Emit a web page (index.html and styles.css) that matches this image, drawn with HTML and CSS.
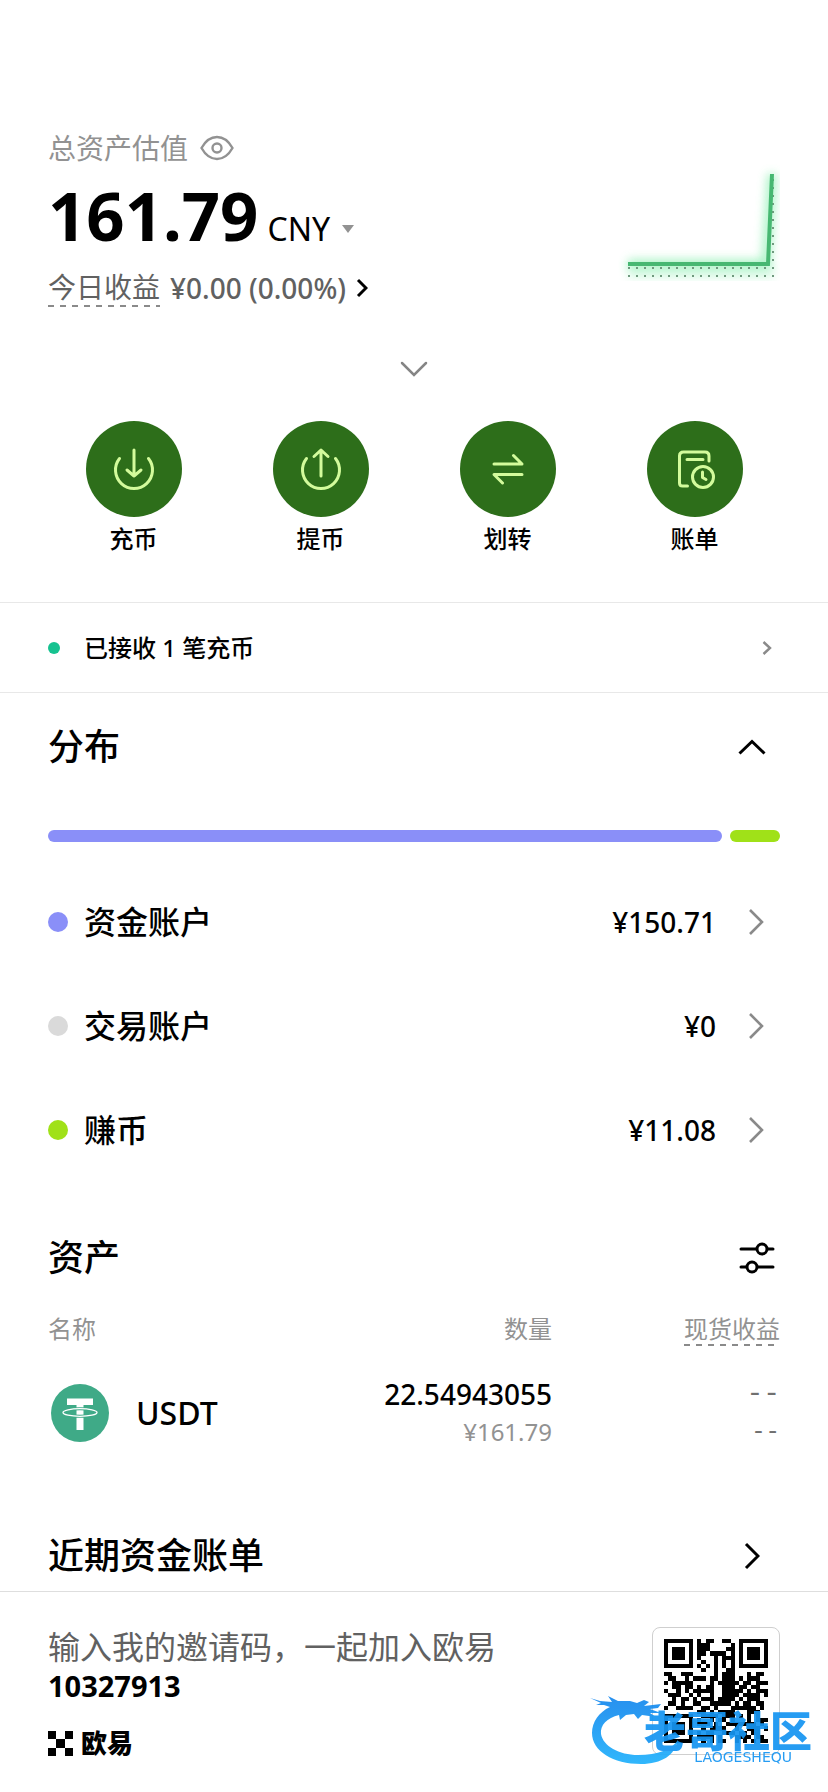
FILE: index.html
```html
<!DOCTYPE html>
<html lang="zh-CN">
<head>
<meta charset="utf-8">
<meta name="viewport" content="width=device-width, initial-scale=1">
<title>资产</title>
<link rel="stylesheet" href="styles.css">
</head>
<body>
<main class="page">
  <section class="overview">
    <div class="summary">
      <div class="summary-label">
        <h1 class="label">总资产估值</h1>
        <button class="icon-button" aria-label="隐藏资产">
          <svg width="34" height="26" viewBox="0 0 34 26" fill="none" stroke="#929292" stroke-width="2.400"><path d="M1.500 13C6 5 11 2 17 2s11 3 15.500 11C28 21 23 24 17 24S6 21 1.500 13Z"/><circle cx="17" cy="13" r="4.500"/></svg>
        </button>
      </div>
      <div class="total">
        <strong class="total-value">161.79</strong>
        <button class="currency">CNY
          <svg width="12" height="8" viewBox="0 0 12 8" fill="#929292"><path d="M0 0H12L6 8Z"/></svg>
        </button>
      </div>
      <a class="profit" href="#profit">
        <span class="dashed">今日收益</span>
        <span class="profit-value">¥0.00 (0.00%)</span>
        <svg width="12" height="20" viewBox="0 0 12 20" fill="none" stroke="#000" stroke-width="3"><path d="M2 2L10 10L2 18"/></svg>
      </a>
    </div>
    <svg class="chart" width="180" height="140" viewBox="0 0 180 140" role="img" aria-label="收益走势">
      <defs>
        <filter id="glow" x="-20%" y="-20%" width="140%" height="140%"><feGaussianBlur stdDeviation="5"/></filter>
        <pattern id="dots" width="8" height="8" patternUnits="userSpaceOnUse"><rect x="4" y="5" width="2" height="2" fill="#6f9a7e"/></pattern>
      </defs>
      <path d="M28 114H166L172 24" fill="none" stroke="#8ff0b4" stroke-width="9" filter="url(#glow)" opacity=".8"/>
      <path d="M28 114H174V128H28Z" fill="#a5f2c2" filter="url(#glow)" opacity=".4"/>
      <path d="M28 114H168L171 28H174V128H28Z" fill="url(#dots)"/>
      <path d="M28 114H168L172 24" fill="none" stroke="#47b872" stroke-width="4"/>
    </svg>
  </section>
  <button class="expander" aria-label="展开">
    <svg width="28" height="16" viewBox="0 0 28 16" fill="none" stroke="#858585" stroke-width="2.500" stroke-linecap="round"><path d="M2 2L14 14L26 2"/></svg>
  </button>
  <nav class="actions">
    <a class="action" href="#deposit"><span class="disc"><svg width="48" height="48" viewBox="0 0 48 48"><path d="M9.500 13.500A18.500 18.500 0 1 0 38.500 13.500M24 5V31M17 25L24 31L31 25"/></svg></span>充币</a>
    <a class="action" href="#withdraw"><span class="disc"><svg width="48" height="48" viewBox="0 0 48 48"><path d="M9.500 13.500A18.500 18.500 0 1 0 38.500 13.500M24 31V5M17 11.500L24 5L31 11.500"/></svg></span>提币</a>
    <a class="action" href="#transfer"><span class="disc"><svg width="48" height="48" viewBox="0 0 48 48"><path d="M10 19H38L29.500 10.500M38 29.500H10L18.500 38"/></svg></span>划转</a>
    <a class="action" href="#bills"><span class="disc"><svg width="48" height="48" viewBox="0 0 48 48"><path d="M16.500 41H11.500Q8.500 41 8.500 38V11Q8.500 7 12.500 7H34Q38 7 38 11V16M16 14.500H32"/><circle cx="32" cy="32" r="10.500"/><path d="M31.500 27V32.500L35 34.500"/></svg></span>账单</a>
  </nav>
  <a class="notice" href="#notice">
    <span class="notice-dot"></span>
    <span class="notice-text">已接收 1 笔充币</span>
    <svg width="10" height="14" viewBox="0 0 10 14" fill="none" stroke="#8a8a8a" stroke-width="2.400"><path d="M1.500 1L8 7L1.500 13"/></svg>
  </a>
  <section class="distribution">
    <header class="section-head">
      <h2 class="title">分布</h2>
      <button class="icon-button collapse" aria-label="收起">
        <svg width="28" height="16" viewBox="0 0 28 16" fill="none" stroke="#000" stroke-width="3"><path d="M1.500 14.500L14 2.500L26.500 14.500"/></svg>
      </button>
    </header>
    <div class="share-bar"><span class="share funding"></span><span class="share earn"></span></div>
    <ul class="accounts">
      <li><a class="account" href="#funding"><span class="dot funding"></span><span class="account-name">资金账户</span><span class="amount">¥150.71</span><svg class="chevron" width="16" height="28" viewBox="0 0 16 28"><path d="M2 2L14 14L2 26"/></svg></a></li>
      <li><a class="account" href="#trading"><span class="dot trading"></span><span class="account-name">交易账户</span><span class="amount">¥0</span><svg class="chevron" width="16" height="28" viewBox="0 0 16 28"><path d="M2 2L14 14L2 26"/></svg></a></li>
      <li><a class="account" href="#earn"><span class="dot earn"></span><span class="account-name">赚币</span><span class="amount">¥11.08</span><svg class="chevron" width="16" height="28" viewBox="0 0 16 28"><path d="M2 2L14 14L2 26"/></svg></a></li>
    </ul>
  </section>
  <section class="assets">
    <header class="section-head">
      <h2 class="title">资产</h2>
      <button class="icon-button filter" aria-label="筛选">
        <svg width="36" height="32" viewBox="0 0 36 32" fill="#fff" stroke="#000" stroke-width="3" stroke-linecap="round"><path d="M2 7H34M2 25H34"/><circle cx="23" cy="7" r="5"/><circle cx="13" cy="25" r="5"/></svg>
      </button>
    </header>
    <table class="asset-table">
      <thead><tr><th>名称</th><th>数量</th><th class="gain"><span class="dashed">现货收益</span></th></tr></thead>
      <tbody><tr>
        <td><span class="coin">
          <svg width="58" height="58" viewBox="0 0 58 58"><circle cx="29" cy="29" r="29" fill="#3faa87"/><path fill="#fff" d="M16 14.500H42V21H32.500V46H25.500V21H16Z"/><ellipse cx="29" cy="28.500" rx="17" ry="3.800" fill="none" stroke="#3faa87" stroke-width="3"/><ellipse cx="29" cy="28.500" rx="17" ry="3.800" fill="none" stroke="#fff" stroke-width="1.300"/></svg>
          USDT</span></td>
        <td><div class="quantity">22.54943055</div><div class="worth">¥161.79</div></td>
        <td class="gain"><div class="none">--</div><div class="none-small">--</div></td>
      </tr></tbody>
    </table>
  </section>
  <a class="recent" href="#recent">
    <h2 class="title">近期资金账单</h2>
    <svg class="chevron dark" width="16" height="28" viewBox="0 0 16 28"><path d="M2 2L14 14L2 26"/></svg>
  </a>
  <footer class="invite">
    <div class="invite-copy">
      <p class="invite-text">输入我的邀请码，一起加入欧易</p>
      <strong class="invite-code">10327913</strong>
      <div class="brand">
        <svg width="25" height="25" viewBox="0 0 25 25"><path d="M0 0H8V8H0ZM17 0H25V8H17ZM8 8H17V17H8ZM0 17H8V25H0ZM17 17H25V25H17Z"/></svg>
        欧易
      </div>
    </div>
    <div class="qr-card">
      <svg class="qr" viewBox="0 0 25 25" role="img" aria-label="邀请二维码"><path id="qr-modules"/></svg>
      <div class="watermark">
        <svg class="dragon" width="100" height="72" viewBox="0 0 100 72">
          <defs><linearGradient id="sea" x2="0" y2="1"><stop offset="0" stop-color="#1787ed"/><stop offset="1" stop-color="#22b2fc"/></linearGradient></defs>
          <path fill="url(#sea)" d="M2 5L12 8L24 9L20 3L30 8L42 8L49 10L56 7L61 9L56 13L73 11L70 15L62 16L73 20L62 20L68 24L54 22L50 26L46 21L38 22L32 27L31 22C19 25 12 32 13 41C15 53 31 62 50 62C70 62 84 56 90 47C87 62 74 71 53 71C25 71 4 58 4 40C4 29 11 19 22 14L16 12L8 12L13 10Z"/>
        </svg>
        <div class="watermark-copy"><span class="watermark-name">老哥社区</span><span class="watermark-latin">LAOGESHEQU</span></div>
      </div>
    </div>
  </footer>
</main>
<script src="qr.js"></script>
</body>
</html>
```
FILE: styles.css
```css
* { box-sizing: border-box; }
body {
  margin: 0;
  background: #fff;
  color: #000;
  font-family: "Noto Sans", "Noto Sans CJK SC", sans-serif;
  font-size: 28px;
  font-weight: 500;
}
h1, h2, p, ul { margin: 0; padding: 0; font-weight: inherit; }
ul { list-style: none; }
a { color: inherit; text-decoration: none; }
button { padding: 0; border: 0; background: none; color: inherit; font: inherit; cursor: pointer; }
svg { display: block; flex: none; }

.page { display: flex; flex-direction: column; min-height: 100vh; padding-top: 128px; }
.overview { display: flex; justify-content: space-between; padding: 0 48px; }
.summary-label { display: flex; align-items: center; gap: 12px; height: 40px; }
.label { color: #929292; font-size: 28px; font-weight: 400; line-height: 40px; }
.total { display: flex; align-items: baseline; gap: 9px; height: 96px; }
.total-value { font-size: 67px; font-weight: 700; line-height: 94px; }
.currency { display: flex; align-items: center; gap: 12px; font-size: 32px; font-weight: 400; line-height: 40px; }
.profit { display: flex; align-items: center; gap: 10px; margin-top: 4px; color: #616161; line-height: 38px; }
.profit .dashed { font-weight: 400; }
.profit-value { font-size: 28px; }
.dashed {
  padding-bottom: 1px;
  background: repeating-linear-gradient(90deg, #8a8a8a 0 6px, transparent 6px 12px) left bottom / 100% 2px no-repeat;
}
.chart { margin-top: 22px; }
.expander { display: flex; align-items: center; align-self: center; height: 48px; margin-top: 38px; }
.actions { display: grid; grid-template-columns: repeat(4, 1fr); padding: 28px 40px 45px; }
.action { display: flex; flex-direction: column; align-items: center; gap: 4px; font-size: 24px; line-height: 36px; }
.disc { display: grid; place-items: center; width: 96px; height: 96px; border-radius: 50%; background: #2d6e1a; }
.disc svg { fill: none; stroke: #d3fb9c; stroke-width: 3; stroke-linecap: round; stroke-linejoin: round; }

.notice { display: flex; align-items: center; height: 91px; padding: 0 56px 0 48px; border: solid #e8e8e8; border-width: 1px 0; font-size: 24px; line-height: 36px; }
.notice-dot { width: 12px; height: 12px; border-radius: 50%; background: #16c290; }
.notice-text { flex: 1; margin-left: 24px; }

.section-head { display: flex; align-items: center; justify-content: space-between; height: 56px; }
.title { font-size: 36px; font-weight: 500; line-height: 56px; }
.distribution { padding: 26px 48px 0; }
.collapse { margin-right: 14px; }
.share-bar { display: flex; gap: 8px; margin: 55px 0 28px; }
.share { height: 12px; border-radius: 6px; }
.share.funding { flex: 674; }
.share.earn { flex: 50; }
.funding { background: #8a8ff8; }
.trading { background: #dadada; }
.earn { background: #a0e118; }
.account { display: flex; align-items: center; height: 104px; padding-right: 16px; }
.dot { width: 20px; height: 20px; border-radius: 50%; }
.account-name { flex: 1; margin-left: 16px; font-size: 32px; line-height: 48px; }
.amount { margin-right: 32px; }
.chevron { fill: none; stroke: #8a8a8a; stroke-width: 2.6; }
.chevron.dark { stroke: #000; stroke-width: 3; }

.assets { padding: 48px 48px 0; }
.filter { margin-right: 5px; }
.asset-table { width: 100%; margin-top: 27px; border-collapse: collapse; table-layout: fixed; }
.asset-table th, .asset-table td { padding: 0; text-align: right; }
.asset-table th { height: 42px; color: #929292; font-size: 24px; font-weight: 400; line-height: 32px; vertical-align: top; }
.asset-table th .dashed { display: inline-block; }
.asset-table th:first-child { text-align: left; }
.asset-table .gain { width: 228px; }
.asset-table td { height: 94px; padding-top: 20px; line-height: 38px; }
.coin { display: flex; align-items: center; gap: 27px; padding-left: 3px; font-size: 32px; }
.quantity, .none { font-size: 28px; }
.worth, .none-small { color: #929292; font-size: 24px; font-weight: 400; }
.none, .none-small { color: #707070; font-family: "Liberation Mono", monospace; }

.recent { display: flex; align-items: center; justify-content: space-between; margin-top: 77px; padding: 0 68px 7px 48px; }
.invite { display: flex; flex: 1; justify-content: space-between; padding: 35px 48px 32px; border-top: 1px solid #dedede; }
.invite-copy { display: flex; flex-direction: column; }
.invite-text { color: #616161; font-size: 32px; font-weight: 400; line-height: 40px; }
.invite-code { font-size: 29px; font-weight: 700; line-height: 38px; }
.brand { display: flex; align-items: center; gap: 8px; margin-top: 20px; font-size: 26px; font-weight: 900; line-height: 36px; }
.qr-card { position: relative; width: 128px; height: 128px; padding: 11px; border: 1px solid #cfcfcf; border-radius: 8px; }
.qr { width: 104px; height: 104px; shape-rendering: crispEdges; }
.watermark { position: absolute; right: -33px; bottom: -11px; color: #1695f2; opacity: .93; }
.dragon { margin-right: 124px; }
.watermark-copy { position: absolute; right: 0; bottom: 1px; display: flex; flex-direction: column; align-items: flex-end; }
.watermark-name { font-size: 42px; font-weight: 900; line-height: 38px; white-space: nowrap; }
.watermark-latin { margin-right: 20px; font: 14px/14px "DejaVu Sans", sans-serif; }
```
FILE: qr.js
```js
const rows = [
  "1111111010110011001111111",
  "1000001011100000101000001",
  "1011101011100001101011101",
  "1011101011011110101011101",
  "1011101010001011101011101",
  "1000001001001010101000001",
  "1111111010101010101111111",
  "0000000001001001100000000",
  "1100111000001011100010110",
  "0110010111011011101011100",
  "1011111000010111110110111",
  "0011011010110011101101100",
  "1001010111110011111010111",
  "0111001010010011110111101",
  "0010110101110111101011100",
  "0110100110011111010110110",
  "1001111001101000111111010",
  "0000000011010111100011100",
  "1111111001111011101010100",
  "1000001010010110100010111",
  "1011101011101001111111010",
  "1011101001011110010011101",
  "1011101010110011101101100",
  "1000001011110100011110110",
  "1111111001010110010101011"
];
const d = rows.map((row, y) =>
  [...row].map((cell, x) => cell === "1" ? `M${x} ${y}h1v1h-1z` : "").join("")
).join("");
document.getElementById("qr-modules").setAttribute("d", d);
```
